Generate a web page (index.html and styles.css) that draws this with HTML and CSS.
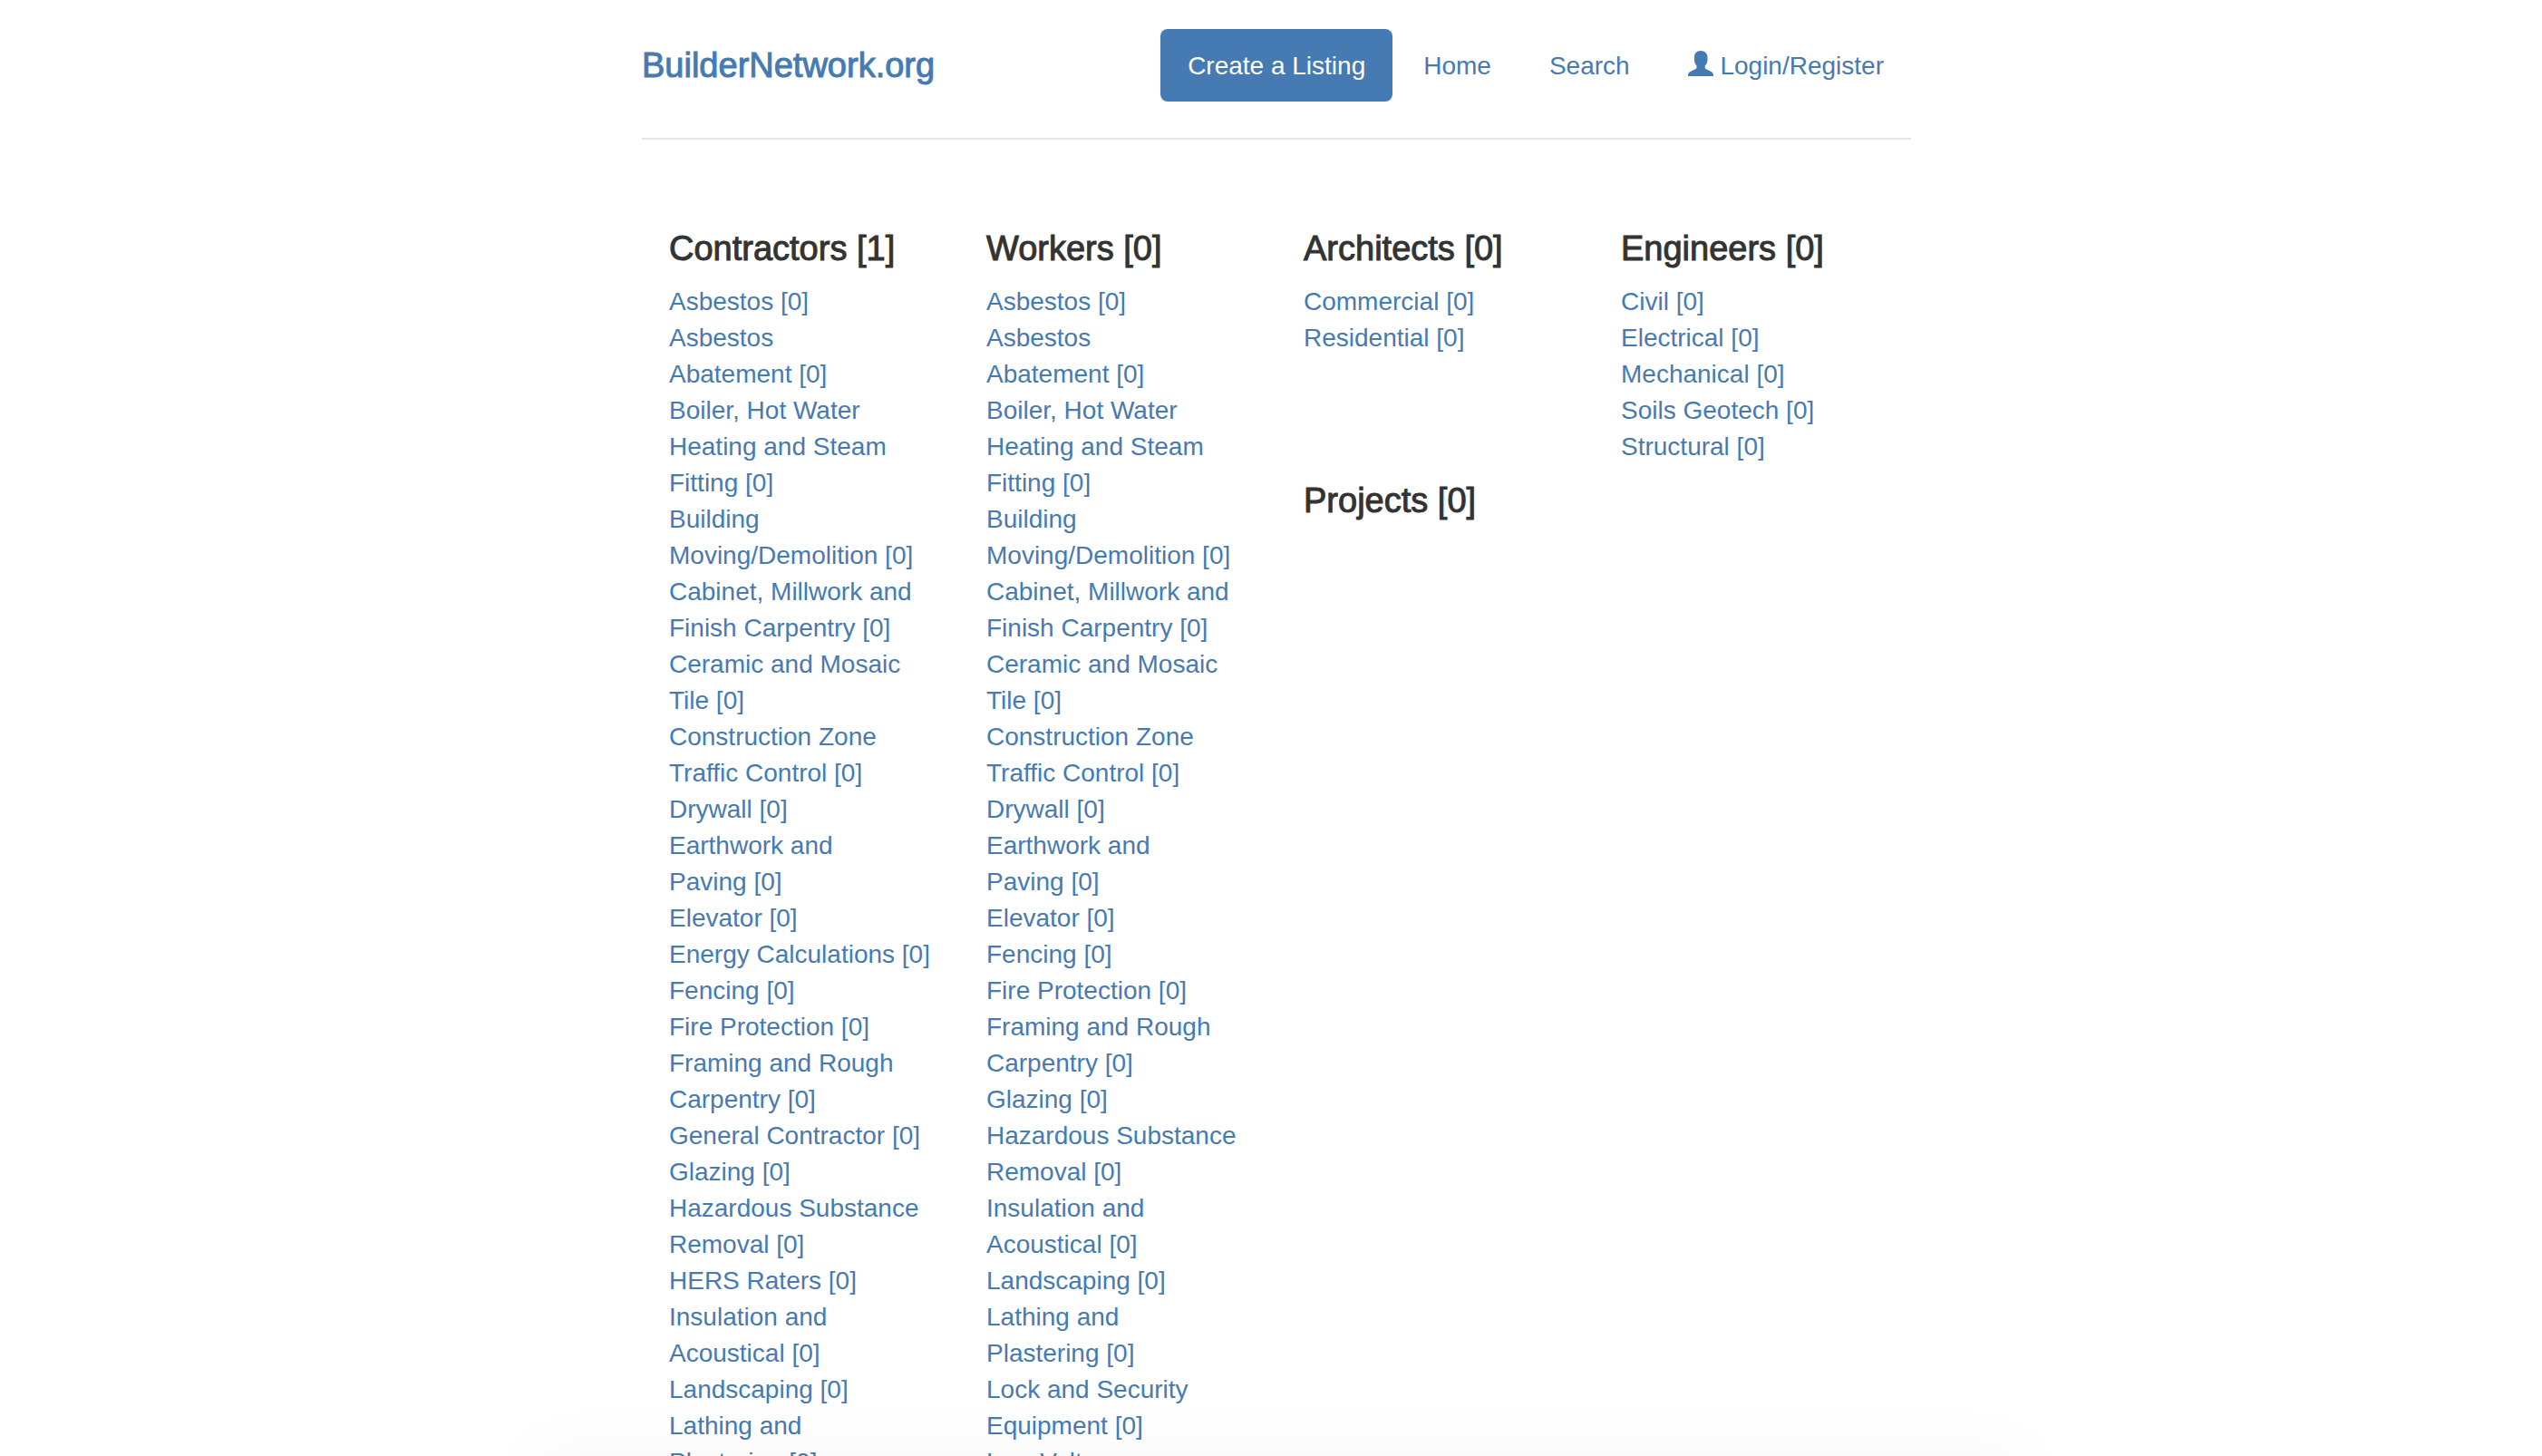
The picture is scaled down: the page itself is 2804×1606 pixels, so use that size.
FILE: index.html
```html
<!DOCTYPE html>
<html lang="en">
<head>
<meta charset="utf-8">
<meta name="viewport" content="width=device-width, initial-scale=1">
<title>BuilderNetwork.org</title>
<link rel="stylesheet" href="styles.css">
</head>
<body>
<div class="container">
  <header class="header">
    <h3 class="brand"><a href="#">BuilderNetwork.org</a></h3>
    <nav>
      <ul class="nav">
        <li><a class="nav-link active" href="#">Create a Listing</a></li>
        <li><a class="nav-link" href="#">Home</a></li>
        <li><a class="nav-link" href="#">Search</a></li>
        <li><a class="nav-link" href="#"><svg class="icon" viewBox="0 0 28 28" aria-hidden="true"><path d="M14 0C9.500 0 7 3 7 7v3c0 3 1 5 2.500 6.500v1.500c0 1.200-.5 1.800-1.500 2.300l-5 2.400C1 23.700 0 25 0 26.500V28h28v-1.500c0-1.500-1-2.800-3-3.800l-4.800-2.400c-1-.5-1.500-1.100-1.500-2.300v-1.500C20.400 15 21.500 13 21.500 10V7c0-4-3-7-7.500-7z"/></svg> Login/Register</a></li>
      </ul>
    </nav>
  </header>
  <main class="columns">
    <section class="column">
      <h4>Contractors [1]</h4>
      <ul class="list">
        <li><a href="#">Asbestos&nbsp;[0]</a></li>
        <li><a href="#">Asbestos Abatement&nbsp;[0]</a></li>
        <li><a href="#">Boiler, Hot Water Heating and Steam Fitting&nbsp;[0]</a></li>
        <li><a href="#">Building Moving/Demolition&nbsp;[0]</a></li>
        <li><a href="#">Cabinet, Millwork and Finish Carpentry&nbsp;[0]</a></li>
        <li><a href="#">Ceramic and Mosaic Tile&nbsp;[0]</a></li>
        <li><a href="#">Construction Zone Traffic Control&nbsp;[0]</a></li>
        <li><a href="#">Drywall&nbsp;[0]</a></li>
        <li><a href="#">Earthwork and Paving&nbsp;[0]</a></li>
        <li><a href="#">Elevator&nbsp;[0]</a></li>
        <li><a href="#">Energy Calculations&nbsp;[0]</a></li>
        <li><a href="#">Fencing&nbsp;[0]</a></li>
        <li><a href="#">Fire Protection&nbsp;[0]</a></li>
        <li><a href="#">Framing and Rough Carpentry&nbsp;[0]</a></li>
        <li><a href="#">General Contractor&nbsp;[0]</a></li>
        <li><a href="#">Glazing&nbsp;[0]</a></li>
        <li><a href="#">Hazardous Substance Removal&nbsp;[0]</a></li>
        <li><a href="#">HERS Raters&nbsp;[0]</a></li>
        <li><a href="#">Insulation and Acoustical&nbsp;[0]</a></li>
        <li><a href="#">Landscaping&nbsp;[0]</a></li>
        <li><a href="#">Lathing and Plastering&nbsp;[0]</a></li>
      </ul>
    </section>
    <section class="column">
      <h4>Workers [0]</h4>
      <ul class="list">
        <li><a href="#">Asbestos&nbsp;[0]</a></li>
        <li><a href="#">Asbestos Abatement&nbsp;[0]</a></li>
        <li><a href="#">Boiler, Hot Water Heating and Steam Fitting&nbsp;[0]</a></li>
        <li><a href="#">Building Moving/Demolition&nbsp;[0]</a></li>
        <li><a href="#">Cabinet, Millwork and Finish Carpentry&nbsp;[0]</a></li>
        <li><a href="#">Ceramic and Mosaic Tile&nbsp;[0]</a></li>
        <li><a href="#">Construction Zone Traffic Control&nbsp;[0]</a></li>
        <li><a href="#">Drywall&nbsp;[0]</a></li>
        <li><a href="#">Earthwork and Paving&nbsp;[0]</a></li>
        <li><a href="#">Elevator&nbsp;[0]</a></li>
        <li><a href="#">Fencing&nbsp;[0]</a></li>
        <li><a href="#">Fire Protection&nbsp;[0]</a></li>
        <li><a href="#">Framing and Rough Carpentry&nbsp;[0]</a></li>
        <li><a href="#">Glazing&nbsp;[0]</a></li>
        <li><a href="#">Hazardous Substance Removal&nbsp;[0]</a></li>
        <li><a href="#">Insulation and Acoustical&nbsp;[0]</a></li>
        <li><a href="#">Landscaping&nbsp;[0]</a></li>
        <li><a href="#">Lathing and Plastering&nbsp;[0]</a></li>
        <li><a href="#">Lock and Security Equipment&nbsp;[0]</a></li>
        <li><a href="#">Low Voltage</a></li>
      </ul>
    </section>
    <div class="column">
      <section class="group">
        <h4>Architects [0]</h4>
        <ul class="list">
          <li><a href="#">Commercial&nbsp;[0]</a></li>
          <li><a href="#">Residential&nbsp;[0]</a></li>
        </ul>
      </section>
      <section>
        <h4>Projects [0]</h4>
      </section>
    </div>
    <section class="column">
      <h4>Engineers [0]</h4>
      <ul class="list">
        <li><a href="#">Civil&nbsp;[0]</a></li>
        <li><a href="#">Electrical&nbsp;[0]</a></li>
        <li><a href="#">Mechanical&nbsp;[0]</a></li>
        <li><a href="#">Soils Geotech&nbsp;[0]</a></li>
        <li><a href="#">Structural&nbsp;[0]</a></li>
      </ul>
    </section>
  </main>
</div>
<div class="bottom-shade"></div>
</body>
</html>
```
FILE: styles.css
```css
* { box-sizing: border-box; }

body {
  margin: 0;
  padding: 32px 0 0 12px;
  background: #fff;
  color: #333;
  font: 28px/40px "Helvetica Neue", Helvetica, "Liberation Sans", Arial, sans-serif;
}

a { color: #467ab3; text-decoration: none; }
ul { margin: 0; padding: 0; list-style: none; }

.container { max-width: 1400px; margin: 0 auto; }

.header {
  display: flex;
  justify-content: space-between;
  align-items: center;
  padding-bottom: 40px;
  border-bottom: 2px solid #e5e5e5;
}

h3, h4 {
  margin: 0;
  font-size: 38px;
  font-weight: 400;
  line-height: 40px;
  -webkit-text-stroke: 1px currentColor;
}

.nav { display: flex; gap: 4px; }
.nav-link { display: block; padding: 21px 30px 19px; border-radius: 8px; }
.nav-link.active { background: #467ab3; color: #fff; }
.icon { width: 28px; height: 28px; fill: currentColor; vertical-align: -2px; }

.columns {
  display: grid;
  grid-template-columns: repeat(4, 1fr);
  padding-top: 100px;
}
.column { padding: 0 30px; }
.list { margin-top: 19px; }
.group { min-height: 278px; }

/* soft shade along the bottom edge of the window */
.bottom-shade {
  position: fixed;
  top: 100%;
  left: 50%;
  width: 1640px;
  height: 80px;
  margin-left: -812px;
  box-shadow: 0 0 80px rgba(0, 0, 0, .04);
  pointer-events: none;
}
```
